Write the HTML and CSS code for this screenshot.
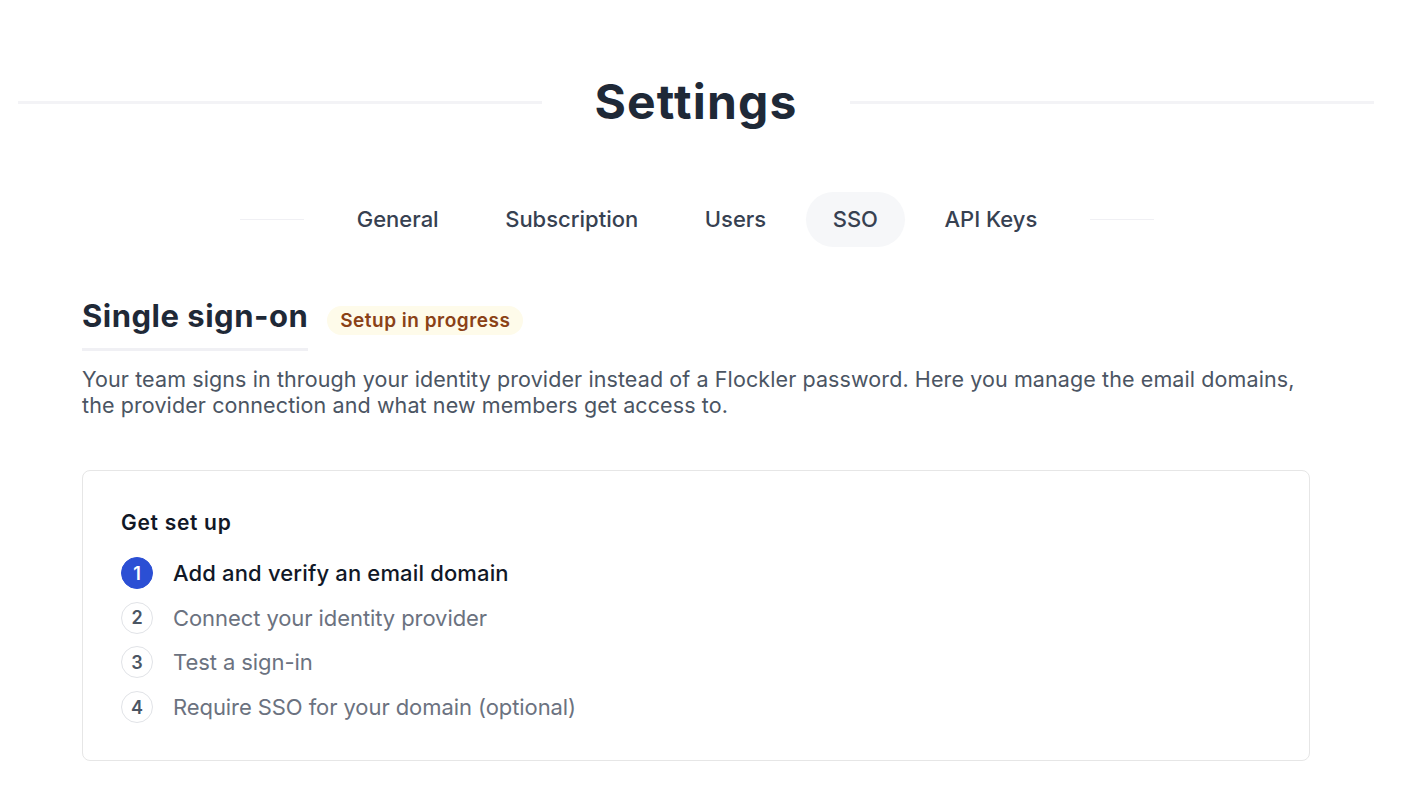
FILE: index.html
```html
<!DOCTYPE html>
<html lang="en">
<head>
<meta charset="utf-8">
<title>Settings</title>
<link rel="stylesheet" href="styles.css">
</head>
<body>
<div class="page">
  <header class="page-head">
    <span class="rule"></span>
    <h1 class="page-title">Settings</h1>
    <span class="rule"></span>
  </header>

  <nav class="tabs">
    <span class="tab-rule"></span>
    <a class="tab">General</a>
    <a class="tab">Subscription</a>
    <a class="tab">Users</a>
    <a class="tab tab-active">SSO</a>
    <a class="tab">API Keys</a>
    <span class="tab-rule"></span>
  </nav>

  <section class="section">
    <div class="section-head">
      <h2 class="section-title">Single sign-on</h2>
      <span class="badge">Setup in progress</span>
    </div>
    <p class="section-desc">Your team signs in through your identity provider instead of a Flockler password. Here you manage the email domains, the provider connection and what new members get access to.</p>

    <div class="card">
      <h3 class="card-title">Get set up</h3>
      <ol class="steps">
        <li class="step step-current"><span class="step-num">1</span><span class="step-label">Add and verify an email domain</span></li>
        <li class="step"><span class="step-num">2</span><span class="step-label">Connect your identity provider</span></li>
        <li class="step"><span class="step-num">3</span><span class="step-label">Test a sign-in</span></li>
        <li class="step"><span class="step-num">4</span><span class="step-label">Require SSO for your domain (optional)</span></li>
      </ol>
    </div>
  </section>
</div>
</body>
</html>
```

FILE: styles.css
```css
* { box-sizing: border-box; }

html, body {
  margin: 0;
  padding: 0;
  background: #ffffff;
  font-family: Inter, "Noto Sans", "Liberation Sans", sans-serif;
  color: #1f2937;
}

.page {
  padding: 0 28px 0 18px;
}

/* Page title flanked by rules */
.page-head {
  display: flex;
  align-items: center;
  gap: 52px;
  padding-top: 72px;
}

.rule {
  flex: 1;
  height: 3px;
  background: #f3f3f6;
}

.page-title {
  margin: 0;
  font-size: 48px;
  line-height: 60px;
  font-weight: 700;
  color: #1f2937;
  letter-spacing: 1.2px;
}

/* Tab bar */
.tabs {
  display: flex;
  justify-content: center;
  align-items: center;
  gap: 12.5px;
  margin-top: 60px;
  padding-left: 2px;
}

.tab-rule {
  width: 64px;
  height: 1px;
  background: #f0f0f4;
  margin: 0 13px;
}

.tab {
  display: block;
  padding: 0 27px;
  height: 55px;
  line-height: 55px;
  border-radius: 28px;
  font-size: 22px;
  font-weight: 500;
  color: #374151;
  cursor: pointer;
}

.tab-active {
  background: #f6f7f9;
}

/* SSO section */
.section {
  padding: 0 64px;
  margin-top: 49px;
}

.section-head {
  display: flex;
  align-items: flex-start;
  gap: 19px;
}

.section-title {
  margin: 0;
  font-size: 31px;
  line-height: 40px;
  font-weight: 700;
  color: #1f2937;
  letter-spacing: 0.5px;
  padding-bottom: 12px;
  border-bottom: 3px solid #f0f0f4;
}

.badge {
  margin-top: 10px;
  padding: 0 13px;
  height: 29px;
  line-height: 29px;
  border-radius: 15px;
  background: #fefbea;
  color: #8a4116;
  font-size: 19px;
  font-weight: 600;
  letter-spacing: 0.5px;
}

.section-desc {
  margin: 15px 0 0;
  font-size: 21.5px;
  line-height: 26px;
  letter-spacing: 0.1px;
  color: #4b5563;
}

/* Setup card */
.card {
  margin-top: 52px;
  border: 1px solid #e6e6e6;
  border-radius: 8px;
  padding: 39px 38px 37px;
}

.card-title {
  margin: 0;
  font-size: 21px;
  line-height: 26px;
  font-weight: 600;
  letter-spacing: 0.7px;
  color: #111827;
}

.steps {
  list-style: none;
  margin: 21px 0 0;
  padding: 0;
  display: flex;
  flex-direction: column;
  gap: 12.7px;
}

.step {
  display: flex;
  align-items: center;
  gap: 20px;
}

.step-num {
  flex: none;
  width: 32px;
  height: 32px;
  border-radius: 50%;
  border: 1px solid #e1e3e7;
  display: flex;
  align-items: center;
  justify-content: center;
  font-size: 18px;
  font-weight: 600;
  color: #4b5563;
}

.step-label {
  font-size: 22px;
  line-height: 28px;
  letter-spacing: -0.08px;
  color: #6b7280;
}

.step-current .step-num {
  background: #2b4fd4;
  border-color: #2b4fd4;
  color: #ffffff;
}

.step-current .step-label {
  color: #111827;
  font-weight: 500;
  letter-spacing: 0.15px;
}
```
